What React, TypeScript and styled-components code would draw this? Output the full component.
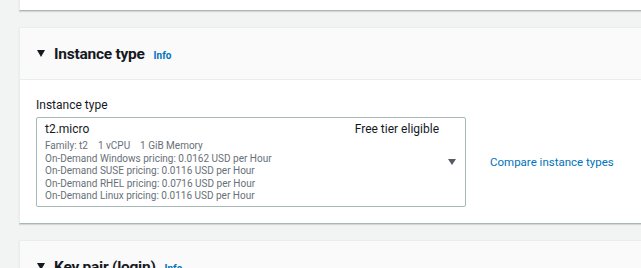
import React from 'react';
import styled, { createGlobalStyle } from 'styled-components';

const GlobalStyle = createGlobalStyle`
  html, body {
    margin: 0;
    padding: 0;
    background: #f2f3f3;
    font-family: Roboto, "Liberation Sans", sans-serif;
    color: #16191f;
    overflow: hidden;
  }
`;

const Page = styled.div`
  display: flex;
  flex-direction: column;
  gap: 16px;
  padding-left: 19px;
  margin-top: -40px;
`;

const Card = styled.section<{ $height?: number }>`
  background: #fff;
  border-left: 1px solid #eaeded;
  border-bottom: 1px solid #aab7b8;
  box-shadow: 0 1px 1px rgba(0, 28, 36, 0.12);
  ${p => (p.$height ? `height: ${p.$height}px;` : '')}
`;

const CardHeader = styled.div`
  display: flex;
  align-items: center;
  height: 51px;
  padding-left: 17px;
  background: #fafafa;
  border-top: 1px solid #eaeded;
  border-bottom: 1px solid #eaeded;
`;

const Caret = styled.span<{ $w: number; $h: number; $color?: string }>`
  flex: none;
  width: 0;
  height: 0;
  border-left: ${p => p.$w / 2}px solid transparent;
  border-right: ${p => p.$w / 2}px solid transparent;
  border-top: ${p => p.$h}px solid ${p => p.$color ?? '#16191f'};
`;

const Title = styled.h2`
  margin: 0 0 0 9px;
  font-size: 15.5px;
  font-weight: 700;
  letter-spacing: -0.25px;
`;

const InfoLink = styled.a`
  font-size: 10px;
  font-weight: 700;
  color: #0073bb;
  margin-left: 9px;
  margin-top: 3px;
`;

const CardBody = styled.div`
  padding: 17px 16px 16px 16px;
`;

const Label = styled.div`
  font-size: 12px;
  line-height: 16px;
  margin-bottom: 4px;
`;

const Row = styled.div`
  display: flex;
  align-items: center;
  gap: 24px;
`;

const SelectBox = styled.div`
  box-sizing: border-box;
  width: 430px;
  height: 90px;
  border: 1px solid #aab7b8;
  border-radius: 2px;
  padding: 4px 9px 4px 8px;
  display: flex;
  align-items: center;
  gap: 9px;
`;

const Options = styled.div`
  flex: 1;
  display: flex;
  flex-direction: column;
`;

const TopLine = styled.div`
  display: flex;
  justify-content: space-between;
  font-size: 12px;
  line-height: 17px;
  margin-bottom: 2px;
`;

const Meta = styled.div`
  font-size: 10px;
  line-height: 12.5px;
  color: #687078;
  white-space: pre;
`;

const CompareLink = styled.a`
  font-size: 11.5px;
  color: #0073bb;
`;

export default function App() {
  const pricing = [
    'On-Demand Windows pricing: 0.0162 USD per Hour',
    'On-Demand SUSE pricing: 0.0116 USD per Hour',
    'On-Demand RHEL pricing: 0.0716 USD per Hour',
    'On-Demand Linux pricing: 0.0116 USD per Hour',
  ];
  return (
    <>
      <GlobalStyle />
      <Page>
        <Card $height={50} />
        <Card>
          <CardHeader>
            <Caret $w={8} $h={7} />
            <Title>Instance type</Title>
            <InfoLink>Info</InfoLink>
          </CardHeader>
          <CardBody>
            <Label>Instance type</Label>
            <Row>
              <SelectBox>
                <Options>
                  <TopLine>
                    <span>t2.micro</span>
                    <span>Free tier eligible</span>
                  </TopLine>
                  <Meta>{'Family: t2    1 vCPU    1 GiB Memory'}</Meta>
                  {pricing.map(p => (
                    <Meta key={p}>{p}</Meta>
                  ))}
                </Options>
                <Caret $w={8} $h={6} $color="#545b64" />
              </SelectBox>
              <CompareLink>Compare instance types</CompareLink>
            </Row>
          </CardBody>
        </Card>
        <Card>
          <CardHeader>
            <Caret $w={8} $h={7} />
            <Title>Key pair (login)</Title>
            <InfoLink>Info</InfoLink>
          </CardHeader>
        </Card>
      </Page>
    </>
  );
}
